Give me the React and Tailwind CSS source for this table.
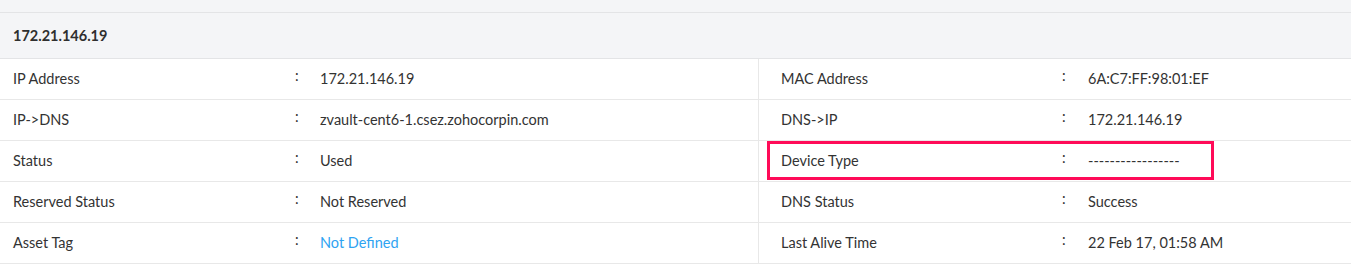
import React from "react";

const rows = [
  ["IP Address", "172.21.146.19", "MAC Address", "6A:C7:FF:98:01:EF"],
  ["IP->DNS", "zvault-cent6-1.csez.zohocorpin.com", "DNS->IP", "172.21.146.19"],
  ["Status", "Used", "Device Type", "-----------------"],
  ["Reserved Status", "Not Reserved", "DNS Status", "Success"],
  ["Asset Tag", "Not Defined", "Last Alive Time", "22 Feb 17, 01:58 AM"],
];

export default function App() {
  return (
    <div
      className="w-[1351px] h-[267px] bg-white text-[14.5px] text-[#333333]"
      style={{ fontFamily: "Lato, 'Open Sans', sans-serif" }}
    >
      <div className="h-[13px] bg-[#f4f5f7] border-b border-[#e3e4e6]" />
      <div className="h-[46px] bg-[#f4f5f7] border-b border-[#e3e4e6] flex items-center pl-[13px] font-bold text-[#2f2f2f]">
        172.21.146.19
      </div>
      {rows.map((r, i) => (
        <div key={i} className="flex h-[41px] border-b border-[#e8e8e8]">
          <div className="w-[759px] border-r border-[#e8e8e8] flex items-center pl-[13px]">
            <div className="w-[282px]">{r[0]}</div>
            <div className="w-[25px] -mt-[6px]">:</div>
            <div className={i === 4 ? "text-[#2ea3f2]" : ""}>{r[1]}</div>
          </div>
          <div className="relative flex-1 flex items-center pl-[22px]">
            <div className="w-[281px]">{r[2]}</div>
            <div className="w-[26px] -mt-[6px]">:</div>
            <div>{r[3]}</div>
            {i === 2 && (
              <div className="absolute left-[8px] top-0 w-[447px] h-[39px] border-[3px] border-[#ff0b58]" />
            )}
          </div>
        </div>
      ))}
    </div>
  );
}
